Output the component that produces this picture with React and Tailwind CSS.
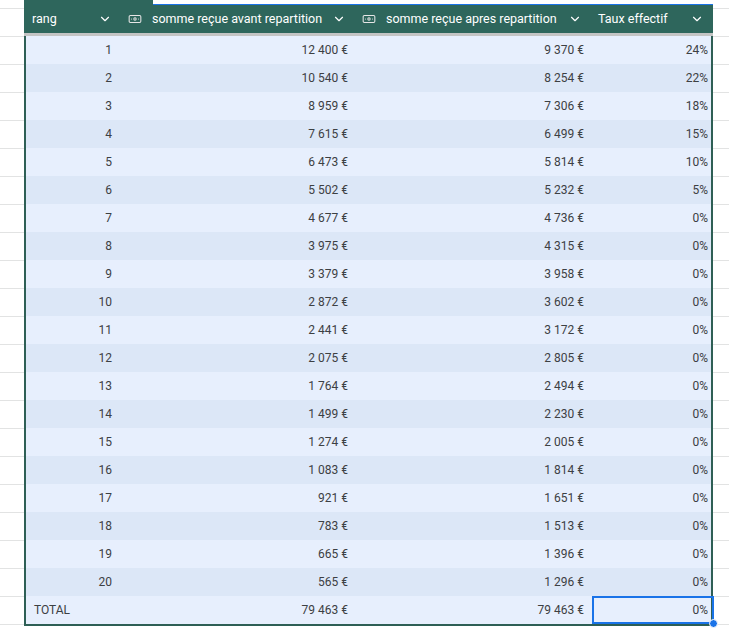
import { Banknote, ChevronDown } from 'lucide-react';

const rows = [
  [1, '12 400 €', '9 370 €', '24%'],
  [2, '10 540 €', '8 254 €', '22%'],
  [3, '8 959 €', '7 306 €', '18%'],
  [4, '7 615 €', '6 499 €', '15%'],
  [5, '6 473 €', '5 814 €', '10%'],
  [6, '5 502 €', '5 232 €', '5%'],
  [7, '4 677 €', '4 736 €', '0%'],
  [8, '3 975 €', '4 315 €', '0%'],
  [9, '3 379 €', '3 958 €', '0%'],
  [10, '2 872 €', '3 602 €', '0%'],
  [11, '2 441 €', '3 172 €', '0%'],
  [12, '2 075 €', '2 805 €', '0%'],
  [13, '1 764 €', '2 494 €', '0%'],
  [14, '1 499 €', '2 230 €', '0%'],
  [15, '1 274 €', '2 005 €', '0%'],
  [16, '1 083 €', '1 814 €', '0%'],
  [17, '921 €', '1 651 €', '0%'],
  [18, '783 €', '1 513 €', '0%'],
  [19, '665 €', '1 396 €', '0%'],
  [20, '565 €', '1 296 €', '0%'],
];

const cols = 'grid grid-cols-[96px_234px_236px_122px]';

export default function App() {
  return (
    <div
      className="w-[729px] h-[634px] overflow-hidden bg-white bg-[linear-gradient(#e2e3e3_1px,transparent_1px)] bg-[length:100%_28px] bg-[position:0_8px] text-[12px] text-[#3c4043]"
      style={{ fontFamily: 'Roboto, "Liberation Sans", sans-serif' }}
    >
      <div className="ml-[24px] w-[689px]">
        <div className="flex h-[5px]">
          <div className="w-[129px] bg-[#2e665c]" />
          <div className="flex-1 bg-white border-b border-[#1a73e8]" />
        </div>
        <div className={`${cols} h-[28px] bg-[#2e665c] text-white text-[12.5px]`}>
          <div className="flex items-center justify-between pl-[8px] pr-[8px]">
            <span>rang</span>
            <ChevronDown size={14} strokeWidth={2} />
          </div>
          <div className="flex items-center justify-between pl-[8px] pr-[8px]">
            <span className="flex items-center gap-[10px]"><Banknote size={14} strokeWidth={1.8} className="text-[#e6e6e6]" />somme reçue avant repartition</span>
            <ChevronDown size={14} strokeWidth={2} />
          </div>
          <div className="flex items-center justify-between pl-[8px] pr-[8px]">
            <span className="flex items-center gap-[10px]"><Banknote size={14} strokeWidth={1.8} className="text-[#e6e6e6]" />somme reçue apres repartition</span>
            <ChevronDown size={14} strokeWidth={2} />
          </div>
          <div className="flex items-center justify-between pl-[8px] pr-[8px]">
            <span>Taux effectif</span>
            <ChevronDown size={14} strokeWidth={2} />
          </div>
        </div>
        <div className="h-[3px] bg-[#c4c4c4]" />
        <div className="border-x-2 border-b-2 border-[#2e5f55] -mt-[0px]">
          {rows.map((r, i) => (
            <div key={r[0]} className={`${cols} h-[28px] items-center ${i % 2 === 0 ? 'bg-[#e7effd]' : 'bg-[#dce7f7]'}`}>
              <div className="text-right pr-[10px]">{r[0]}</div>
              <div className="text-right pr-[8px]">{r[1]}</div>
              <div className="text-right pr-[8px]">{r[2]}</div>
              <div className="text-right pr-[6px]">{r[3]}</div>
            </div>
          ))}
          <div className={`${cols} h-[28px] items-center bg-[#e7effd]`}>
            <div className="pl-[8px]">TOTAL</div>
            <div className="text-right pr-[8px]">79 463 €</div>
            <div className="text-right pr-[8px]">79 463 €</div>
            <div className="relative h-full flex items-center justify-end pr-[4px] border-2 border-[#1a73e8]">
              0%
              <div className="absolute -right-[6px] -bottom-[6px] w-[9px] h-[9px] rounded-full bg-[#1a73e8] border border-white" />
            </div>
          </div>
        </div>
      </div>
    </div>
  );
}
